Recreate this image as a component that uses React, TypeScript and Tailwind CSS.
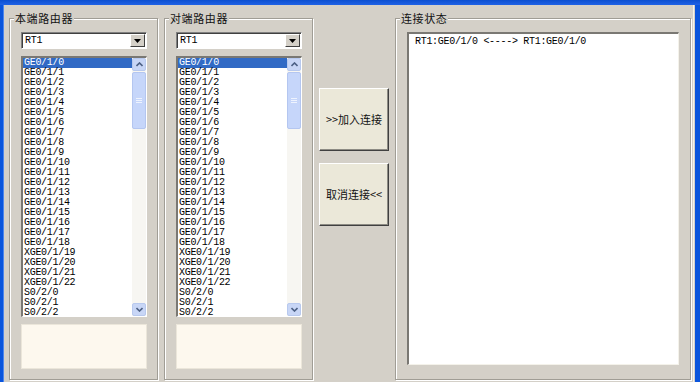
import React from "react";

const ports = [
  ...Array.from({ length: 19 }, (_, i) => `GE0/1/${i}`),
  ...[19, 20, 21, 22].map((n) => `XGE0/1/${n}`),
  "S0/2/0",
  "S0/2/1",
  "S0/2/2",
];

const mono = "font-['Liberation_Mono',monospace] text-[10px] tracking-[-0.3px]";
const cjk = "font-['Noto_Sans_CJK_SC','Noto_Sans',sans-serif] text-[11px] text-[#111]";

const GroupBox: React.FC<{ label: string; className?: string; children: React.ReactNode }> = ({
  label,
  className,
  children,
}) => (
  <div
    className={`relative border border-[#a09d95] shadow-[inset_1px_1px_0_#fff,1px_1px_0_#fff] ${className ?? ""}`}
  >
    <span className={`absolute -top-[8px] left-[4px] bg-[#d4d0c8] px-[1px] leading-[14px] tracking-[0.6px] ${cjk}`}>
      {label}
    </span>
    {children}
  </div>
);

const Combo = () => (
  <div className="flex h-[17px] w-[126px] items-center border-t border-l border-[#808080] border-b border-r border-b-white border-r-white bg-white shadow-[inset_1px_1px_0_#404040]">
    <span className={`ml-[3px] flex-1 leading-[10px] text-black ${mono}`}>RT1</span>
    <div className="mr-[1px] flex h-[13px] w-[15px] items-center justify-center border border-t-white border-l-white border-b-[#404040] border-r-[#404040] bg-[#d4d0c8]">
      <svg width="7" height="4" viewBox="0 0 7 4">
        <path d="M0 0h7L3.5 4z" fill="#000" />
      </svg>
    </div>
  </div>
);

const Chevron: React.FC<{ down?: boolean }> = ({ down }) => (
  <svg width="7" height="5" viewBox="0 0 7 5">
    <path
      d={down ? "M0.5 1L3.5 4L6.5 1" : "M0.5 4L3.5 1L6.5 4"}
      stroke="#4d6185"
      strokeWidth="1.6"
      fill="none"
    />
  </svg>
);

const ListBox = () => (
  <div className="flex h-[261px] w-[126px] border-t-2 border-l-2 border-t-[#7a7873] border-l-[#7a7873] border-b border-r border-b-white border-r-white bg-white">
    <div className="flex-1 overflow-hidden">
      {ports.map((p, i) => (
        <div
          key={p}
          className={`h-[10px] pl-[1px] leading-[10px] ${mono} ${
            i === 0 ? "bg-[#316ac5] text-white" : "text-black"
          }`}
        >
          {p}
        </div>
      ))}
    </div>
    <div className="flex w-[14px] flex-col bg-[#f7f6f2]">
      <div className="flex h-[13px] items-center justify-center rounded-[2px] border border-[#b8c9ee] bg-[#c8d6f6]">
        <Chevron />
      </div>
      <div className="mt-[1px] flex h-[57px] flex-col items-center justify-center gap-[1px] rounded-[2px] border border-[#b4c6f0] bg-[#c6d6fa]">
        <div className="h-[1px] w-[6px] bg-[#eef3fe]" />
        <div className="h-[1px] w-[6px] bg-[#eef3fe]" />
        <div className="h-[1px] w-[6px] bg-[#eef3fe]" />
      </div>
      <div className="flex-1" />
      <div className="flex h-[13px] items-center justify-center rounded-[2px] border border-[#b8c9ee] bg-[#c8d6f6]">
        <Chevron down />
      </div>
    </div>
  </div>
);

const RouterPanel: React.FC<{ label: string }> = ({ label }) => (
  <GroupBox label={label} className="h-[362px] w-[149px] shrink-0">
    <div className="flex flex-col pl-[11px] pt-[13px]">
      <Combo />
      <div className="mt-[7px]">
        <ListBox />
      </div>
      <div className="mt-[7px] h-[45px] w-[126px] border border-[#ebe6da] bg-[#fdf8ee]" />
    </div>
  </GroupBox>
);

const XpButton: React.FC<{ label: string }> = ({ label }) => (
  <button
    className={`flex h-[63px] w-[70px] items-center justify-center border border-t-white border-l-white border-b-[#404040] border-r-[#404040] bg-[#ebe8d9] shadow-[inset_-1px_-1px_0_#8d8b84] ${cjk}`}
  >
    {label}
  </button>
);

export default function App() {
  return (
    <div className="flex h-[382px] w-[700px] flex-col overflow-hidden bg-[#0a55dc]">
      <div className="h-[5px] bg-gradient-to-b from-[#0b4fd0] to-[#1f62e6]" />
      <div className="flex flex-1 pl-[3px] pr-[5px]">
        <div className="flex flex-1 border-l border-[#4d86ec] bg-[#d4d0c8]">
          <div className="flex flex-1 gap-[6px] pl-[5px] pt-[13px]">
            <RouterPanel label="本端路由器" />
            <RouterPanel label="对端路由器" />
            <div className="flex w-[70px] shrink-0 flex-col gap-[12px] pt-[70px]">
              <XpButton label=">>加入连接" />
              <XpButton label="取消连接<<" />
            </div>
            <GroupBox label="连接状态" className="h-[362px] w-[296px] shrink-0">
              <div className="pl-[11px] pt-[13px]">
                <div className="h-[333px] w-[272px] border-t-2 border-l-2 border-t-[#7a7873] border-l-[#7a7873] border-b border-r border-b-[#f4f2ea] border-r-[#f4f2ea] bg-white pl-[6px] pt-[2px]">
                  <div className={`leading-[12px] text-black ${mono}`}>
                    RT1:GE0/1/0 &lt;----&gt; RT1:GE0/1/0
                  </div>
                </div>
              </div>
            </GroupBox>
          </div>
          <div className="w-[2px] border-l border-[#f4f2ea] bg-[#d4d0c8]" />
        </div>
      </div>
    </div>
  );
}
